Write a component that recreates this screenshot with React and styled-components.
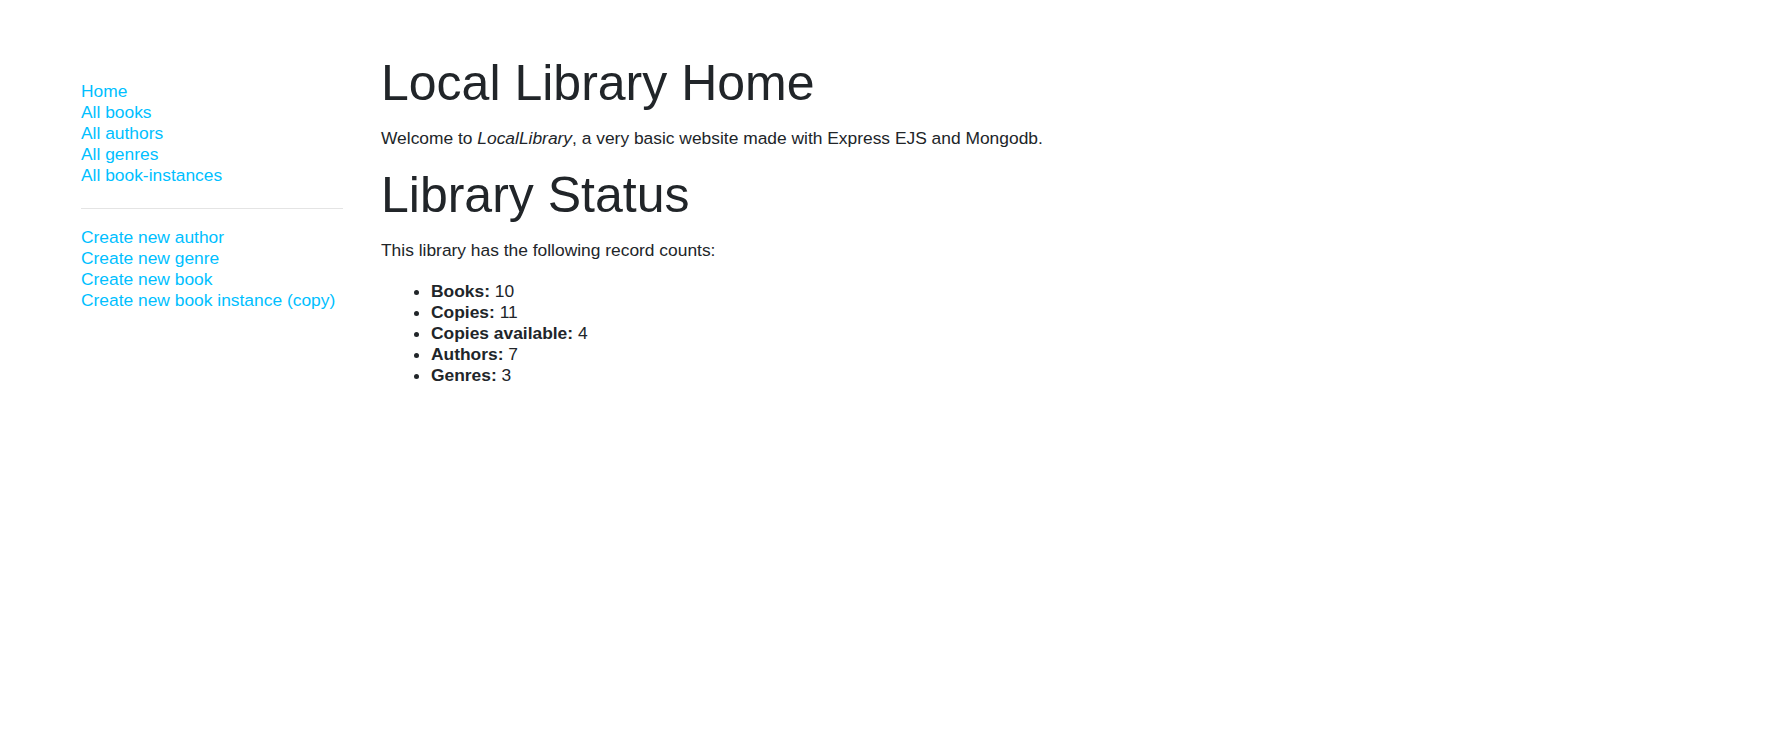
import React from "react";
import styled, { createGlobalStyle } from "styled-components";

const GlobalStyle = createGlobalStyle`
  html, body {
    margin: 0;
    padding: 0;
    background: #ffffff;
  }
  body {
    font-family: "Liberation Sans", Arial, Helvetica, sans-serif;
    font-size: 17.4px;
    line-height: 21px;
    color: #212529;
  }
`;

const Page = styled.div`
  display: flex;
  align-items: flex-start;
  padding-left: 81px;
`;

const Sidebar = styled.nav`
  width: 262px;
  flex: none;
  padding-top: 81px;
`;

const NavList = styled.ul`
  list-style: none;
  margin: 0;
  padding: 0;
`;

const NavItem = styled.li`
  margin: 0;
`;

const NavLink = styled.a`
  color: #00bfff;
  text-decoration: none;
  cursor: pointer;
  &:hover {
    text-decoration: underline;
  }
`;

const Divider = styled.hr`
  border: 0;
  border-top: 1px solid #e4e4e4;
  margin: 22px 0 18px;
  height: 0;
`;

const Main = styled.main`
  flex: 1;
  padding-left: 38px;
  padding-top: 53px;
`;

const Heading = styled.h1`
  font-size: 50px;
  font-weight: 400;
  line-height: 60px;
  margin: 0 0 15px;
  color: #212529;
`;

const Paragraph = styled.p`
  margin: 0 0 ${(p) => (p.$tight ? 0 : 16)}px;
`;

const StatList = styled.ul`
  margin: 20px 0 0;
  padding-left: 50px;
  list-style: disc;
`;

const StatItem = styled.li``;

const Label = styled.strong`
  font-weight: 700;
`;

const primaryLinks = [
  "Home",
  "All books",
  "All authors",
  "All genres",
  "All book-instances",
];

const createLinks = [
  "Create new author",
  "Create new genre",
  "Create new book",
  "Create new book instance (copy)",
];

const stats = [
  ["Books:", 10],
  ["Copies:", 11],
  ["Copies available:", 4],
  ["Authors:", 7],
  ["Genres:", 3],
];

export default function App() {
  return (
    <>
      <GlobalStyle />
      <Page>
        <Sidebar>
          <NavList>
            {primaryLinks.map((l) => (
              <NavItem key={l}>
                <NavLink href="#">{l}</NavLink>
              </NavItem>
            ))}
          </NavList>
          <Divider />
          <NavList>
            {createLinks.map((l) => (
              <NavItem key={l}>
                <NavLink href="#">{l}</NavLink>
              </NavItem>
            ))}
          </NavList>
        </Sidebar>
        <Main>
          <Heading>Local Library Home</Heading>
          <Paragraph>
            Welcome to <em>LocalLibrary</em>, a very basic website made with
            Express EJS and Mongodb.
          </Paragraph>
          <Heading>Library Status</Heading>
          <Paragraph $tight>
            This library has the following record counts:
          </Paragraph>
          <StatList>
            {stats.map(([label, value]) => (
              <StatItem key={label}>
                <Label>{label}</Label> {value}
              </StatItem>
            ))}
          </StatList>
        </Main>
      </Page>
    </>
  );
}
